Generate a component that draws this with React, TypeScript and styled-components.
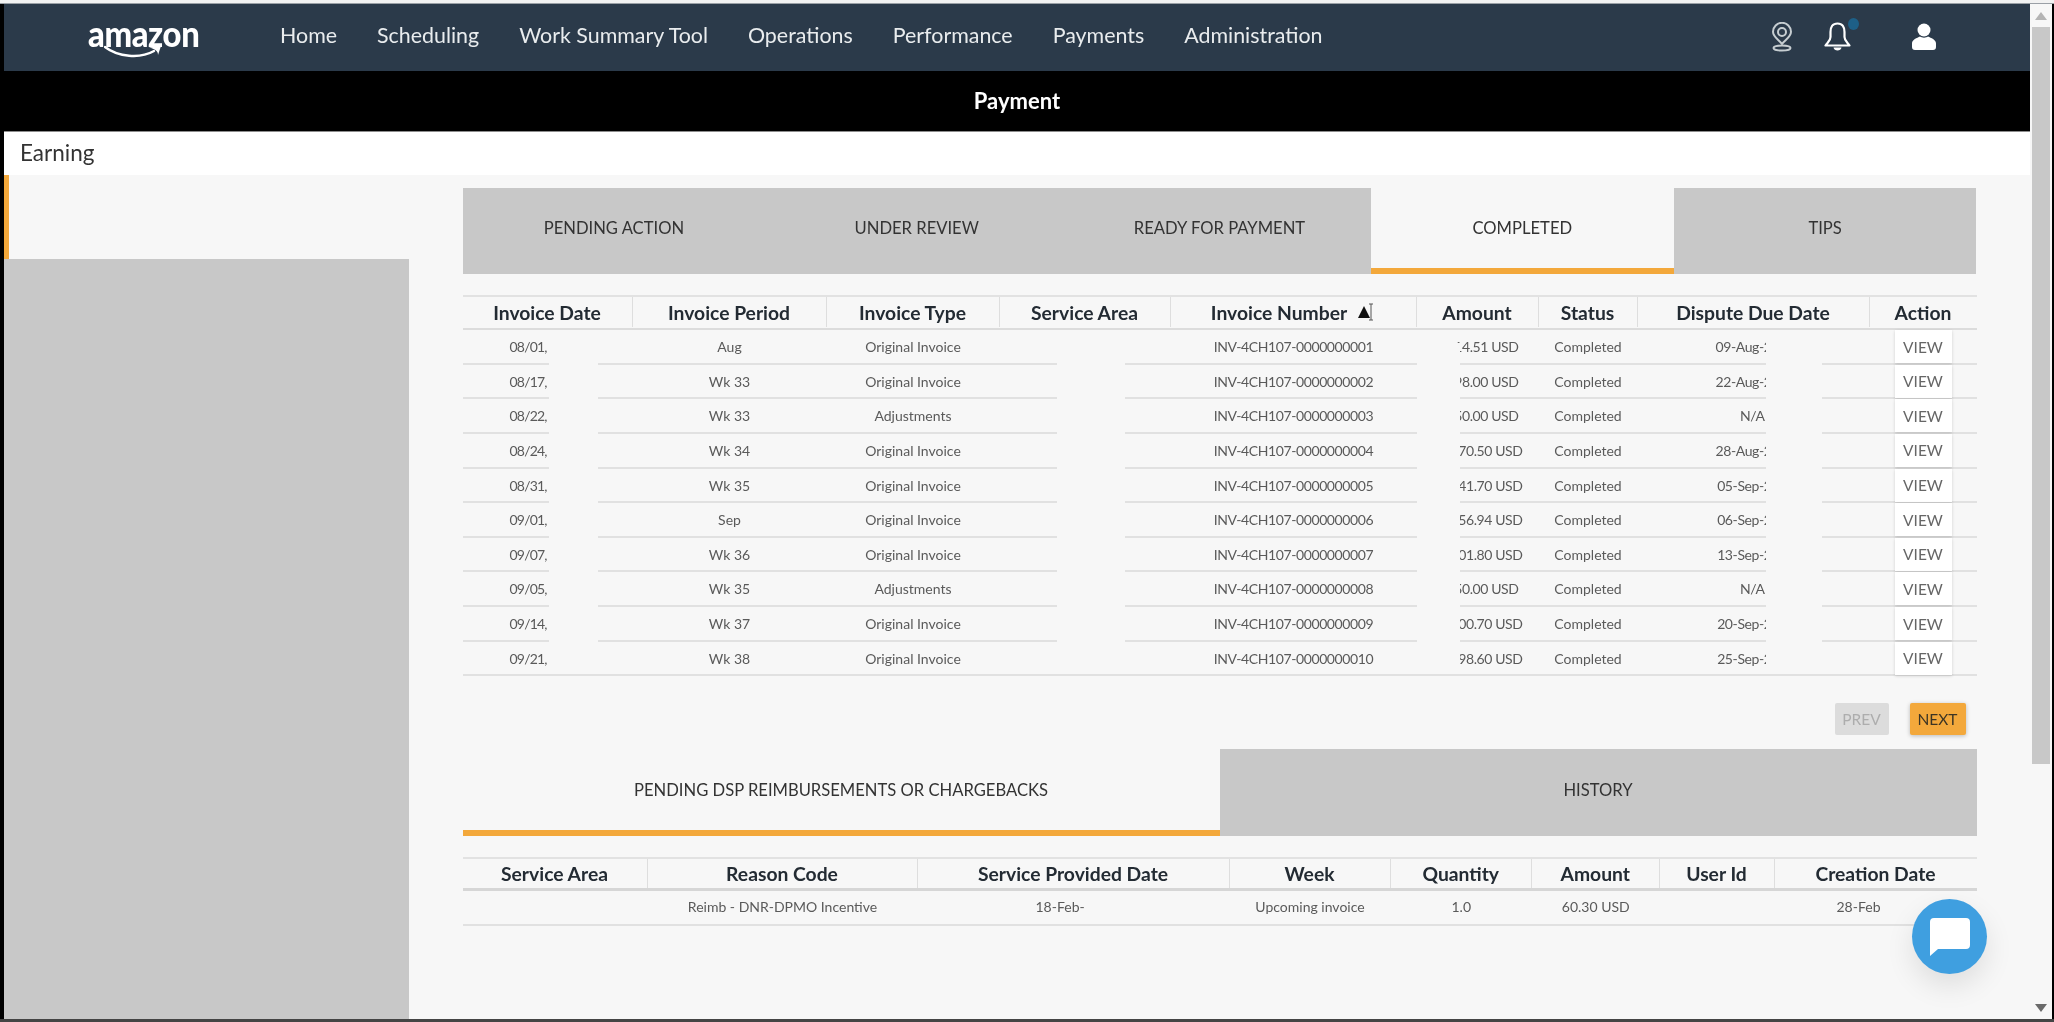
import React from "react";
import styled, { createGlobalStyle } from "styled-components";

const Global = createGlobalStyle`
  html, body { margin: 0; padding: 0; background: #000; overflow: hidden; }
  * { box-sizing: border-box; }
  body { font-family: "Lato", "Noto Sans", sans-serif; }
`;

const Screen = styled.div`
  width: 2054px;
  height: 1022px;
  display: flex;
  flex-direction: column;
  background: #000;
  overflow: hidden;
  position: relative;
  filter: blur(0.4px);
`;
const TopLine = styled.div`
  height: 4px;
  flex: none;
  background: #f2f2f2;
  border-bottom: 1px solid #9aa0a6;
`;
const BottomLine = styled.div`
  height: 3px;
  flex: none;
  background: #444;
`;
const Frame = styled.div`
  flex: 1;
  min-height: 0;
  display: flex;
  padding: 0 2px 0 4px;
`;
const Main = styled.div`
  width: 2026px;
  display: flex;
  flex-direction: column;
  background: #f7f7f7;
`;
const Header = styled.header`
  height: 67px;
  flex: none;
  display: flex;
  align-items: center;
  background: #2b3a4a;
  padding-left: 84px;
  padding-right: 94px;
`;
const Logo = styled.div`
  width: 112px;
  height: 40px;
  margin-top: -4px;
  position: relative;
  flex: none;
`;
const LogoWord = styled.span`
  display: block;
  font-family: "Lato", sans-serif;
  font-weight: 900;
  font-size: 36px;
  line-height: 34px;
  color: #fff;
  letter-spacing: -0.4px;
  transform: scaleX(0.91);
  transform-origin: left center;
`;
const LogoSmile = styled.svg`
  position: absolute;
  left: 16px;
  top: 29px;
`;
const Nav = styled.nav`
  display: flex;
  gap: 40px;
  margin-left: 80px;
  margin-bottom: 5px;
`;
const NavItem = styled.a`
  font-size: 21.4px;
  color: #e9ecee;
  white-space: nowrap;
`;
const HeaderIcons = styled.div`
  margin-left: auto;
  margin-bottom: 2px;
  display: flex;
  align-items: center;
`;
const BellWrap = styled.div`
  position: relative;
  margin-left: 31px;
  margin-right: 61px;
  height: 30px;
`;
const BellDot = styled.span`
  position: absolute;
  right: -8px;
  top: -4px;
  width: 11px;
  height: 12px;
  border-radius: 50%;
  background: #1d5f87;
`;
const TitleBar = styled.div`
  height: 61px;
  flex: none;
  display: flex;
  align-items: center;
  justify-content: center;
  padding-bottom: 2px;
  background: #000;
  color: #fff;
  font-size: 22px;
  font-weight: 700;
  border-bottom: 1px solid #8d8d8d;
`;
const Crumb = styled.div`
  height: 43px;
  flex: none;
  display: flex;
  align-items: center;
  background: #fff;
  padding-left: 16px;
  padding-bottom: 3px;
  font-size: 22.5px;
  color: #333;
`;
const Body = styled.div`
  flex: 1;
  min-height: 0;
  display: flex;
`;
const Sidebar = styled.aside`
  width: 405px;
  flex: none;
  display: flex;
  flex-direction: column;
`;
const SideActive = styled.div`
  height: 84px;
  flex: none;
  border-left: 5px solid #f3a83b;
`;
const SideFill = styled.div`
  flex: 1;
  background: #c8c8c8;
`;
const Content = styled.main`
  width: 1514px;
  margin-left: 53.5px;
  padding-top: 13px;
  position: relative;
`;
const Tabs = styled.div<{ $h: number }>`
  display: flex;
  height: ${(p) => p.$h}px;
`;
const Tab = styled.div<{ $active?: boolean }>`
  flex: 1;
  display: flex;
  align-items: center;
  justify-content: center;
  font-size: 16.6px;
  color: #333;
  white-space: nowrap;
  background: ${(p) => (p.$active ? "#f7f7f7" : "#c8c8c8")};
  border-bottom: 6px solid ${(p) => (p.$active ? "#f3a83b" : "#c8c8c8")};
`;
const TableBlock = styled.section`
  position: relative;
  margin-top: 21px;
`;
const HeadRow = styled.div<{ $cols: string; $thick?: boolean }>`
  display: grid;
  grid-template-columns: ${(p) => p.$cols};
  height: ${(p) => (p.$thick ? "34px" : "35px")};
  padding-bottom: ${(p) => (p.$thick ? "0" : "1px")};
  border-top: 2px solid #e2e2e2;
  border-bottom: ${(p) => (p.$thick ? "3px solid #d6d6d6" : "2px solid #dcdcdc")};
`;
const HeadCell = styled.div`
  display: flex;
  align-items: center;
  justify-content: center;
  gap: 10px;
  font-size: 19.3px;
  font-weight: 700;
  color: #232b33;
  white-space: nowrap;
  border-right: 1px solid #dedede;
  &:last-child { border-right: none; }
`;
const DataRow = styled.div<{ $cols: string; $h: number; $lift: number }>`
  display: grid;
  grid-template-columns: ${(p) => p.$cols};
  height: ${(p) => p.$h}px;
  padding-bottom: ${(p) => p.$lift}px;
  border-bottom: 2px solid #e1e1e1;
`;
const Cell = styled.div<{ $start?: number; $end?: number; $track?: number }>`
  display: flex;
  align-items: center;
  justify-content: ${(p) =>
    p.$start !== undefined ? "flex-start" : p.$end !== undefined ? "flex-end" : "center"};
  padding-left: ${(p) => p.$start ?? 0}px;
  padding-right: ${(p) => p.$end ?? 0}px;
  font-size: 14px;
  letter-spacing: ${(p) => p.$track ?? 0}px;
  color: #5a5a5a;
  white-space: nowrap;
  overflow: hidden;
`;
const ActionCell = styled.div`
  display: flex;
  align-items: center;
  justify-content: center;
`;
const ViewButton = styled.button`
  width: 57px;
  height: 33px;
  flex: none;
  border: none;
  padding: 0;
  background: #fff;
  font-family: inherit;
  font-size: 15.5px;
  color: #666;
  box-shadow: 0 1px 3px rgba(0, 0, 0, 0.16);
`;
const Patch = styled.div<{ $left: number; $width: number; $top: number }>`
  position: absolute;
  left: ${(p) => p.$left}px;
  width: ${(p) => p.$width}px;
  top: ${(p) => p.$top}px;
  bottom: 2px;
  background: #f7f7f7;
`;
const Pager = styled.div`
  display: flex;
  justify-content: flex-end;
  gap: 21px;
  padding-right: 11px;
  margin-top: 27px;
  margin-bottom: 14px;
`;
const PageButton = styled.button<{ $primary?: boolean }>`
  height: 32px;
  width: ${(p) => (p.$primary ? "56px" : "54px")};
  border: none;
  padding: 0;
  border-radius: 2px;
  font-family: inherit;
  font-size: 15.5px;
  color: ${(p) => (p.$primary ? "#3d3524" : "#adadad")};
  background: ${(p) => (p.$primary ? "#f3a83b" : "#dcdcdc")};
  box-shadow: ${(p) => (p.$primary ? "0 1px 4px rgba(0,0,0,.25)" : "none")};
`;
const ScrollBar = styled.div`
  width: 22px;
  flex: none;
  display: flex;
  flex-direction: column;
  align-items: center;
  background: #f7f7f7;
`;
const ScrollBtn = styled.div`
  height: 23px;
  flex: none;
  display: flex;
  align-items: center;
  justify-content: center;
`;
const ScrollThumb = styled.div`
  width: 18px;
  height: 737px;
  flex: none;
  background: #c8c8c8;
`;
const ScrollGap = styled.div`
  flex: 1;
`;
const ChatBubble = styled.div`
  position: absolute;
  left: 1912px;
  top: 899px;
  width: 75px;
  height: 75px;
  border-radius: 50%;
  background: #3f9fe0;
  display: flex;
  align-items: center;
  justify-content: center;
  box-shadow: 0 12px 28px rgba(0, 0, 0, 0.1);
`;

const cols1 = "170px 194px 173px 171px 246px 122px 99px 232px 107px";
const cols2 = "185px 270px 312px 161px 141.5px 127.5px 115px 202px";

const rows = [
  ["08/01,", "Aug", "Original Invoice", "0000000001", "14.51 USD", 20, "09-Aug-2"],
  ["08/17,", "Wk 33", "Original Invoice", "0000000002", "98.00 USD", 20, "22-Aug-2"],
  ["08/22,", "Wk 33", "Adjustments", "0000000003", "50.00 USD", 20, "N/A"],
  ["08/24,", "Wk 34", "Original Invoice", "0000000004", "70.50 USD", 16, "28-Aug-2"],
  ["08/31,", "Wk 35", "Original Invoice", "0000000005", "41.70 USD", 16, "05-Sep-2"],
  ["09/01,", "Sep", "Original Invoice", "0000000006", "56.94 USD", 16, "06-Sep-2"],
  ["09/07,", "Wk 36", "Original Invoice", "0000000007", "01.80 USD", 16, "13-Sep-2"],
  ["09/05,", "Wk 35", "Adjustments", "0000000008", "50.00 USD", 20, "N/A"],
  ["09/14,", "Wk 37", "Original Invoice", "0000000009", "00.70 USD", 16, "20-Sep-2"],
  ["09/21,", "Wk 38", "Original Invoice", "0000000010", "98.60 USD", 16, "25-Sep-2"],
] as const;

const nav = ["Home", "Scheduling", "Work Summary Tool", "Operations", "Performance", "Payments", "Administration"];
const tabs = ["PENDING ACTION", "UNDER REVIEW", "READY FOR PAYMENT", "COMPLETED", "TIPS"];
const heads1 = ["Invoice Date", "Invoice Period", "Invoice Type", "Service Area", "Invoice Number", "Amount", "Status", "Dispute Due Date", "Action"];
const heads2 = ["Service Area", "Reason Code", "Service Provided Date", "Week", "Quantity", "Amount", "User Id", "Creation Date"];

const Smile = () => (
  <LogoSmile width="60" height="14" viewBox="0 0 60 14" fill="none">
    <path d="M1 2 C14 12 36 14 50 6" stroke="#fff" strokeWidth="2.4" strokeLinecap="round" />
    <path d="M45 2.5 L57 1 L54 10 C54 6 51 4 45 2.5 Z" fill="#fff" />
  </LogoSmile>
);

const PinIcon = () => (
  <svg width="22" height="30" viewBox="0 0 22 30" fill="none" stroke="#c6cdd1" strokeWidth="2">
    <path d="M11 22 C8 18 2 15 2 9.8 A9 9 0 0 1 20 9.8 C20 15 14 18 11 22 Z" />
    <circle cx="11" cy="10" r="4" />
    <ellipse cx="11" cy="26" rx="8.5" ry="2.6" />
  </svg>
);

const BellIcon = () => (
  <svg width="27" height="30" viewBox="0 0 27 30" fill="none" stroke="#fff" strokeWidth="2.2" strokeLinejoin="round">
    <path d="M13.5 1.5 C8.5 1.5 6.5 5 6.5 10 V15 C6.5 19 3.5 20.5 1.5 23.5 H25.5 C23.5 20.5 20.5 19 20.5 15 V10 C20.5 5 18.5 1.5 13.5 1.5 Z" />
    <path d="M9.5 25.5 C10 29.5 17 29.5 17.5 25.5" fill="#fff" stroke="none" />
  </svg>
);

const UserIcon = () => (
  <svg width="24" height="27" viewBox="0 0 24 27" fill="#fff">
    <circle cx="12" cy="7" r="6.5" />
    <path d="M0 24 V20.5 C0 16.5 5 15 8 13.5 C10 15 14 15 16 13.5 C19 15 24 16.5 24 20.5 V24 Q24 27 21 27 H3 Q0 27 0 24 Z" />
  </svg>
);

const SortIcon = () => (
  <svg width="18" height="18" viewBox="0 0 18 18" fill="none">
    <path d="M1 15 L7 3 L13 15 Z" fill="#111" />
    <path d="M12 1 H16 M14 1 V17 M12 17 H16" stroke="#555" strokeWidth="1" />
  </svg>
);

const Arrow = ({ up, color }: { up?: boolean; color: string }) => (
  <svg width="12" height="8" viewBox="0 0 12 8">
    <path d={up ? "M6 0 L12 8 H0 Z" : "M0 0 H12 L6 8 Z"} fill={color} />
  </svg>
);

const ChatIcon = () => (
  <svg width="42" height="40" viewBox="0 0 42 40">
    <path d="M5 1 H37 Q41 1 41 5 V28 Q41 32 37 32 H9 L1 39 V5 Q1 1 5 1 Z" fill="#fff" />
  </svg>
);

export default function App() {
  return (
    <>
      <Global />
      <Screen>
        <TopLine />
        <Frame>
          <Main>
            <Header>
              <Logo>
                <LogoWord>amazon</LogoWord>
                <Smile />
              </Logo>
              <Nav>
                {nav.map((n) => (
                  <NavItem key={n}>{n}</NavItem>
                ))}
              </Nav>
              <HeaderIcons>
                <PinIcon />
                <BellWrap>
                  <BellIcon />
                  <BellDot />
                </BellWrap>
                <UserIcon />
              </HeaderIcons>
            </Header>
            <TitleBar>Payment</TitleBar>
            <Crumb>Earning</Crumb>
            <Body>
              <Sidebar>
                <SideActive />
                <SideFill />
              </Sidebar>
              <Content>
                <Tabs $h={86}>
                  {tabs.map((t) => (
                    <Tab key={t} $active={t === "COMPLETED"}>
                      {t}
                    </Tab>
                  ))}
                </Tabs>
                <TableBlock>
                  <HeadRow $cols={cols1}>
                    {heads1.map((h) => (
                      <HeadCell key={h}>
                        {h}
                        {h === "Invoice Number" && <SortIcon />}
                      </HeadCell>
                    ))}
                  </HeadRow>
                  {rows.map((r) => (
                    <DataRow key={r[3]} $cols={cols1} $h={34.64} $lift={1}>
                      <Cell $start={47} $track={-0.8}>{r[0]}</Cell>
                      <Cell>{r[1]}</Cell>
                      <Cell>{r[2]}</Cell>
                      <Cell />
                      <Cell $track={-0.4}>INV-4CH107-{r[3]}</Cell>
                      <Cell $end={r[5]} $track={-0.4}>{r[4]}</Cell>
                      <Cell>Completed</Cell>
                      <Cell $end={r[6] === "N/A" ? 105 : 98} $track={-0.4}>{r[6]}</Cell>
                      <ActionCell>
                        <ViewButton>VIEW</ViewButton>
                      </ActionCell>
                    </DataRow>
                  ))}
                  <Patch $left={86} $width={49} $top={37} />
                  <Patch $left={594} $width={68} $top={37} />
                  <Patch $left={954} $width={43} $top={48} />
                  <Patch $left={1303} $width={56} $top={37} />
                </TableBlock>
                <Pager>
                  <PageButton>PREV</PageButton>
                  <PageButton $primary>NEXT</PageButton>
                </Pager>
                <Tabs $h={87}>
                  <Tab $active>PENDING DSP REIMBURSEMENTS OR CHARGEBACKS</Tab>
                  <Tab>HISTORY</Tab>
                </Tabs>
                <TableBlock>
                  <HeadRow $cols={cols2} $thick>
                    {heads2.map((h) => (
                      <HeadCell key={h}>{h}</HeadCell>
                    ))}
                  </HeadRow>
                  <DataRow $cols={cols2} $h={35} $lift={3}>
                    <Cell />
                    <Cell>Reimb - DNR-DPMO Incentive</Cell>
                    <Cell $start={118}>18-Feb-</Cell>
                    <Cell>Upcoming invoice</Cell>
                    <Cell>1.0</Cell>
                    <Cell>60.30 USD</Cell>
                    <Cell />
                    <Cell $start={62}>28-Feb</Cell>
                  </DataRow>
                </TableBlock>
              </Content>
            </Body>
          </Main>
          <ScrollBar>
            <ScrollBtn>
              <Arrow up color="#b4b4b4" />
            </ScrollBtn>
            <ScrollThumb />
            <ScrollGap />
            <ScrollBtn>
              <Arrow color="#6a6a6a" />
            </ScrollBtn>
          </ScrollBar>
        </Frame>
        <BottomLine />
        <ChatBubble>
          <ChatIcon />
        </ChatBubble>
      </Screen>
    </>
  );
}
